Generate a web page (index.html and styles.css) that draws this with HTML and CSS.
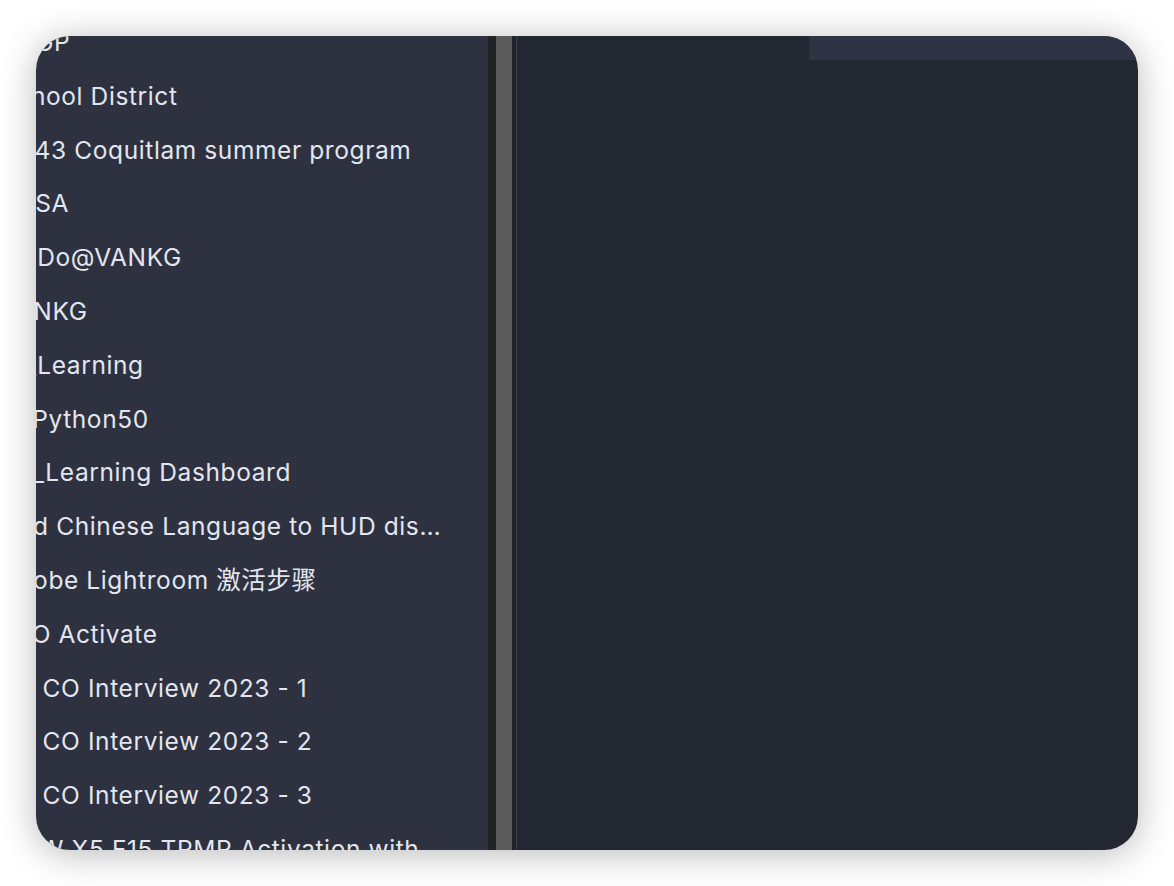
FILE: index.html
```html
<!DOCTYPE html>
<html lang="en">
<head>
<meta charset="utf-8">
<title>Pages</title>
<link rel="stylesheet" href="styles.css">
</head>
<body>
<div class="window">
  <aside class="sidebar">
    <ul class="pages">
      <li class="page">BCGP</li>
      <li class="page">School District</li>
      <li class="page">SD43 Coquitlam summer program</li>
      <li class="page">BCSA</li>
      <li class="page">To Do@VANKG</li>
      <li class="page">VANKG</li>
      <li class="page">AI_Learning</li>
      <li class="page">AI Python50</li>
      <li class="page">DL_Learning Dashboard</li>
      <li class="page">Add Chinese Language to HUD display settings</li>
      <li class="page">Adobe Lightroom 激活步骤</li>
      <li class="page">ESO Activate</li>
      <li class="page">BC CO Interview 2023 - 1</li>
      <li class="page">BC CO Interview 2023 - 2</li>
      <li class="page">BC CO Interview 2023 - 3</li>
      <li class="page">BMW X5 F15 TPMP Activation with ISTA</li>
    </ul>
  </aside>
  <div class="splitter"></div>
  <main class="content">
    <div class="tabbar"></div>
  </main>
</div>
</body>
</html>
```

FILE: styles.css
```css
html, body {
  margin: 0;
  padding: 0;
  background: #ffffff;
}

body {
  width: 1174px;
  height: 886px;
  overflow: hidden;
  font-family: Inter, "Noto Sans CJK SC", sans-serif;
}

.window {
  margin: 36px 0 0 36px;
  width: 1102px;
  height: 814px;
  border-radius: 34px;
  overflow: hidden;
  display: flex;
  box-shadow: 0 4px 36px rgba(0, 0, 0, 0.28);
}

.sidebar {
  width: 452px;
  flex: none;
  background: #2d3140;
  overflow: hidden;
}

.pages {
  list-style: none;
  margin: -20px 0 0 -36px;
  padding: 0;
  width: 442px;
  color: #e3e6ee;
  font-size: 24.5px;
  letter-spacing: 0.6px;
}

.page {
  height: 53.8px;
  line-height: 53.8px;
  white-space: nowrap;
  overflow: hidden;
  text-overflow: ellipsis;
}

.splitter {
  flex: none;
  width: 16px;
  background: #5a5a5a;
  border-left: 8px solid #222325;
  border-right: 4px solid #222325;
}

.content {
  flex: 1;
  display: flex;
  flex-direction: column;
  align-items: flex-end;
  background: #232732;
  border-left: 1px solid #3a3f4e;
}

.tabbar {
  width: 329px;
  height: 24px;
  background: #2f3444;
}
```
